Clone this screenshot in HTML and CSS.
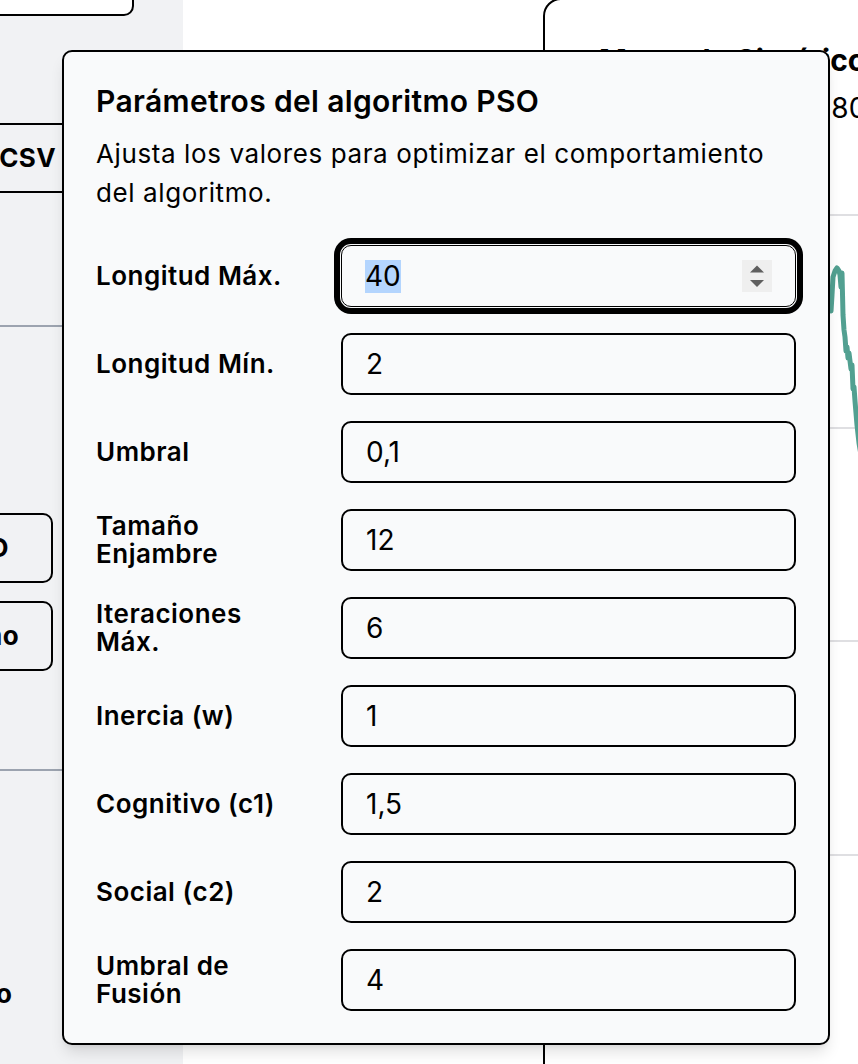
FILE: index.html
```html
<!DOCTYPE html>
<html lang="es">
<head>
<meta charset="utf-8">
<title>Parámetros del algoritmo PSO</title>
<link rel="stylesheet" href="styles.css">
</head>
<body>
<div class="app">
  <aside class="sidebar">
    <div class="side-inner">
      <button class="side-btn side-btn--top" type="button">Generar serie</button>
      <button class="side-btn side-btn--csv" type="button">Exportar CSV</button>
      <hr class="side-rule side-rule--a">
      <button class="side-btn side-btn--run" type="button">Ejecutar PSO</button>
      <button class="side-btn side-btn--alt" type="button">Comparar algoritmo</button>
      <hr class="side-rule side-rule--b">
      <p class="side-text">Resultado</p>
    </div>
  </aside>
  <main class="main">
    <section class="card">
      <header class="card-head">
        <h2 class="card-title">Mercado Sintético</h2>
        <p class="card-sub">Total de puntos: 800</p>
      </header>
      <svg class="chart" width="500" height="800" viewBox="0 0 500 800">
        <g class="grid-lines">
          <line x1="0" y1="90" x2="500" y2="90"/>
          <line x1="0" y1="303" x2="500" y2="303"/>
          <line x1="0" y1="516" x2="500" y2="516"/>
          <line x1="0" y1="730" x2="500" y2="730"/>
        </g>
        <polyline class="series" points="200,200 215,185 228,175 234,166 235,178 236,186 237,170 238,152 240,146 242,143 244,146 245,150 246,162 247,148 248,190 249,205 250,212 251,226 252,222 253,233 254,228 255,236 256,244 257,240 258,264 259,262 260,276 261,288 262,300 264,318 266,330"/>
      </svg>
    </section>
  </main>
</div>

<div class="modal" role="dialog" aria-labelledby="pso-title">
  <h2 class="modal-title" id="pso-title">Parámetros del algoritmo PSO</h2>
  <p class="modal-desc">Ajusta los valores para optimizar el comportamiento del algoritmo.</p>
  <div class="form-grid">
    <label class="form-label" for="f1">Longitud Máx.</label>
    <div class="field field--focus" id="f1">
      <span class="sel">40</span>
      <span class="spin">
        <svg width="30" height="32" viewBox="0 0 30 32"><path d="M8 12.5 L15 5.5 L22 12.5 Z"/><path d="M8 20 L22 20 L15 27 Z"/></svg>
      </span>
    </div>

    <label class="form-label" for="f2">Longitud Mín.</label>
    <input class="field" id="f2" type="text" value="2" readonly>

    <label class="form-label" for="f3">Umbral</label>
    <input class="field" id="f3" type="text" value="0,1" readonly>

    <label class="form-label" for="f4">Tamaño Enjambre</label>
    <input class="field" id="f4" type="text" value="12" readonly>

    <label class="form-label" for="f5">Iteraciones Máx.</label>
    <input class="field" id="f5" type="text" value="6" readonly>

    <label class="form-label" for="f6">Inercia (w)</label>
    <input class="field" id="f6" type="text" value="1" readonly>

    <label class="form-label" for="f7">Cognitivo (c1)</label>
    <input class="field" id="f7" type="text" value="1,5" readonly>

    <label class="form-label" for="f8">Social (c2)</label>
    <input class="field" id="f8" type="text" value="2" readonly>

    <label class="form-label" for="f9">Umbral de Fusión</label>
    <input class="field" id="f9" type="text" value="4" readonly>
  </div>
</div>
</body>
</html>
```

FILE: styles.css
```css
* { box-sizing: border-box; }

html, body {
  margin: 0;
  padding: 0;
}

body {
  width: 858px;
  height: 1064px;
  overflow: hidden;
  position: relative;
  background: #ffffff;
  color: #000000;
  font-family: Inter, "Noto Sans", "Liberation Sans", sans-serif;
}

.app {
  display: flex;
  height: 1064px;
}

/* ---------- sidebar ---------- */
.sidebar {
  width: 183px;
  flex: none;
  background: #f1f2f4;
  overflow: hidden;
}

.side-inner {
  width: 403px;
  margin-left: -220px;
  display: flex;
  flex-direction: column;
  align-items: flex-start;
}

.side-btn {
  display: flex;
  align-items: center;
  justify-content: flex-end;
  padding: 0;
  border: 2px solid #000;
  border-radius: 10px;
  background: transparent;
  color: #000;
  font-family: Inter, "Noto Sans", sans-serif;
  font-weight: 700;
  font-size: 26px;
  letter-spacing: 0.4px;
  line-height: 1;
  white-space: nowrap;
}

.side-btn--top {
  margin-top: -50px;
  height: 66px;
  width: 354px;
  padding-right: 40px;
  background: #ffffff;
}

.side-btn--csv {
  margin-top: 107px;
  height: 70px;
  width: 370px;
  padding-right: 92px;
}

.side-rule {
  align-self: stretch;
  height: 2px;
  margin: 0;
  border: 0;
  background: #9ca3af;
}

.side-rule--a { margin-top: 132px; }

.side-btn--run {
  margin-top: 186px;
  height: 70px;
  width: 273px;
  padding-right: 42px;
}

.side-btn--alt {
  margin-top: 18px;
  height: 70px;
  width: 273px;
  padding-right: 32px;
}

.side-rule--b { margin-top: 98px; }

.side-text {
  align-self: stretch;
  margin: 209px 0 0;
  padding-right: 171px;
  text-align: right;
  font-weight: 700;
  font-size: 26px;
  line-height: 28px;
}

/* ---------- main / card ---------- */
.main {
  flex: 1;
  min-width: 0;
  overflow: hidden;
  padding-left: 360px;
  display: flex;
  align-items: flex-start;
}

.card {
  flex: none;
  width: 600px;
  height: 1100px;
  margin-top: -2px;
  border: 2px solid #000;
  border-radius: 18px;
  background: #ffffff;
  padding: 42px 0 0 50px;
}

.card-title {
  margin: 0 0 0 4px;
  font-size: 30px;
  line-height: 36px;
  font-weight: 700;
  white-space: nowrap;
}

.card-sub {
  margin: 13px 0 0 16px;
  font-size: 28px;
  line-height: 34px;
  white-space: nowrap;
}

.chart {
  display: block;
}

.grid-lines line {
  stroke: #d4d4d8;
  stroke-width: 1.5;
}

.series {
  fill: none;
  stroke: #52a091;
  stroke-width: 5;
  stroke-linejoin: round;
  stroke-linecap: round;
}

/* ---------- modal ---------- */
.modal {
  position: absolute;
  left: 62px;
  top: 50px;
  width: 768px;
  padding: 32px;
  background: #f9fafb;
  border: 2px solid #000;
  border-radius: 10px;
  box-shadow: 0 10px 15px -3px rgba(0, 0, 0, 0.12), 0 4px 6px -4px rgba(0, 0, 0, 0.1);
}

.modal-title {
  margin: 0;
  font-size: 30px;
  line-height: 34px;
  font-weight: 600;
  letter-spacing: 0.35px;
}

.modal-desc {
  margin: 16px 0 0;
  font-size: 26px;
  line-height: 39px;
  font-weight: 400;
  letter-spacing: 0.6px;
}

.form-grid {
  margin-top: 33px;
  display: grid;
  grid-template-columns: 200px 1fr;
  column-gap: 45px;
  row-gap: 26px;
  align-items: center;
}

.form-label {
  font-size: 26px;
  line-height: 28px;
  font-weight: 600;
  letter-spacing: 0.5px;
}

.field {
  display: flex;
  align-items: center;
  width: 100%;
  height: 62px;
  margin: 0;
  padding: 0 23px;
  border: 2px solid #000;
  border-radius: 10px;
  background: #f9fafb;
  color: #000;
  font-family: Inter, "Noto Sans", sans-serif;
  font-size: 28px;
  font-weight: 400;
  outline: none;
}

.field--focus {
  border-width: 1.5px;
  box-shadow: 0 0 0 1px #f9fafb, 0 0 0 7px #000;
}

.sel {
  display: inline-block;
  line-height: 33px;
  background: #b4d5fe;
}

.spin {
  margin-left: auto;
  display: block;
  width: 30px;
  height: 32px;
  background: #efefef;
}

.spin svg {
  display: block;
  fill: #5f5f5f;
}
```
